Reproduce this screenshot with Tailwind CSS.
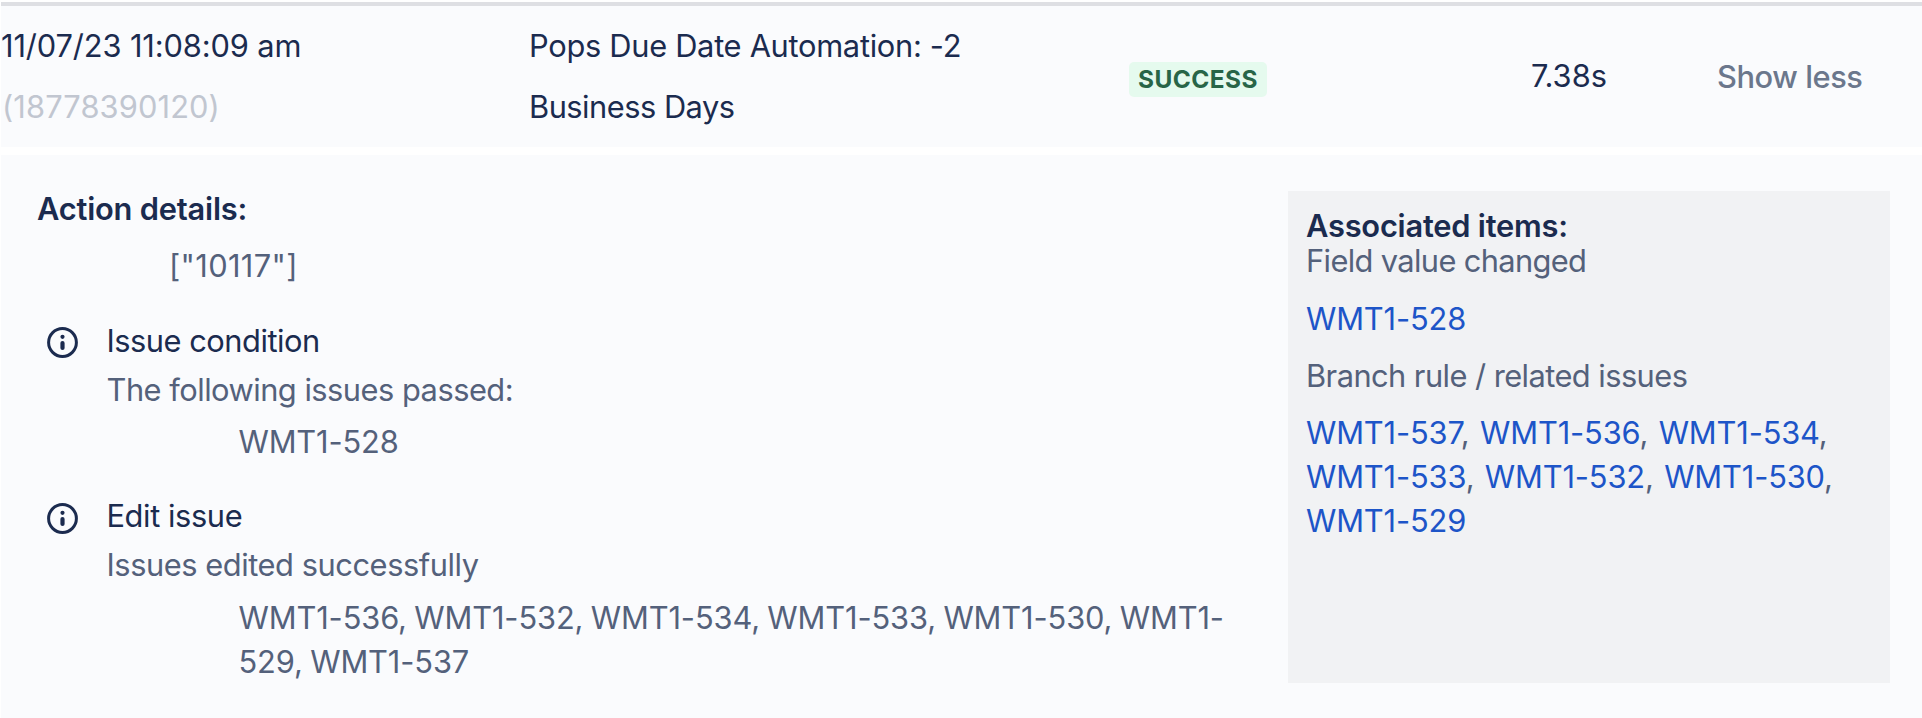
<!DOCTYPE html>
<html lang="en">
<head>
    <meta charset="UTF-8">
    <meta name="viewport" content="width=device-width, initial-scale=1.0">
    <title>Audit log</title>
    <script src="https://cdn.jsdelivr.net/npm/@tailwindcss/browser@4"></script>
    <style>
        body {
            font-family: 'Inter', sans-serif;
        }
    </style>
</head>
<body class="bg-white text-[30.8px] leading-[44px] font-[430] text-[#1b2b4f] w-[1922px] h-[718px] overflow-hidden pl-px pt-0.5 flex flex-col">

<!-- Log entry -->
<div class="flex items-center h-[145px] shrink-0 border-t-4 border-[#dedfe3] bg-[#fafbfd] leading-[61px]">
    <div class="w-[528px] shrink-0 pb-0.5">
        <div class="tracking-[-0.12px]">11/07/23 11:08:09 am</div>
        <div class="tracking-[0.12px] pl-px text-[#c1c6d0]">(18778390120)</div>
    </div>
    <div class="w-[600px] shrink-0 pb-0.5">
        <div class="tracking-[-0.29px]">Pops Due Date Automation: -2</div>
        <div class="tracking-[-0.5px]">Business Days</div>
    </div>
    <div class="w-[402px] shrink-0 flex pt-1.5">
        <span class="bg-[#e5faee] text-[#286547] font-bold text-[24.4px] tracking-[0.45px] leading-[34px] h-[35px] rounded-[5px] px-[9px]">SUCCESS</span>
    </div>
    <div class="w-[186px] shrink-0 pb-0.5">7.38s</div>
    <button class="font-medium tracking-[-0.42px]">
        <span class="text-[#6b778c]">Show less</span>
    </button>
</div>

<!-- Expanded details -->
<div class="mt-2 flex h-[563px] shrink-0 bg-[#fafbfd] pl-9 pr-8 pt-8 pb-[35px]">
    <div class="w-[1215px] shrink-0 mr-9">
        <h2 class="font-semibold tracking-[-0.2px]">Action details:</h2>
        <p class="mt-[13px] pl-[132px] tracking-[0.35px] text-[#54617b]">["10117"]</p>

        <div class="mt-[31px] flex">
            <svg class="w-[31px] h-[31px] mt-2 ml-2.5 mr-[28.5px] shrink-0" viewBox="0 0 31 31" fill="none">
                <circle cx="15.5" cy="15.5" r="13.9" stroke="#1b2b4f" stroke-width="3"/>
                <circle cx="15.5" cy="9.8" r="2.1" fill="#1b2b4f"/>
                <rect x="13.4" y="14" width="4.2" height="9" rx="2.1" fill="#1b2b4f"/>
            </svg>
            <div>
                <h3 class="tracking-[-0.48px]">Issue condition</h3>
                <p class="mt-[5px] tracking-[-0.5px] text-[#54617b]">The following issues passed:</p>
                <p class="mt-2 pl-[132px] tracking-[-0.15px] text-[#54617b]">WMT1-528</p>
            </div>
        </div>

        <div class="mt-[30px] flex">
            <svg class="w-[31px] h-[31px] mt-[9px] ml-2.5 mr-[28.5px] shrink-0" viewBox="0 0 31 31" fill="none">
                <circle cx="15.5" cy="15.5" r="13.9" stroke="#1b2b4f" stroke-width="3"/>
                <circle cx="15.5" cy="9.8" r="2.1" fill="#1b2b4f"/>
                <rect x="13.4" y="14" width="4.2" height="9" rx="2.1" fill="#1b2b4f"/>
            </svg>
            <div>
                <h3 class="tracking-[-0.4px]">Edit issue</h3>
                <p class="mt-[5px] tracking-[-0.44px] text-[#54617b]">Issues edited successfully</p>
                <p class="mt-[9px] pl-[132px] tracking-[-0.12px] [word-spacing:-1.1px] text-[#54617b] whitespace-nowrap">WMT1-536, WMT1-532, WMT1-534, WMT1-533, WMT1-530, WMT1-<br>529, WMT1-537</p>
            </div>
        </div>
    </div>

    <aside class="grow mt-1 h-[492px] px-[18px] pt-[17px] bg-[#f1f2f4] text-[#54617b]">
        <h2 class="font-semibold leading-[35px] tracking-[-0.22px] text-[#1b2b4f]">Associated items:</h2>
        <p class="leading-[35px] tracking-[-0.63px]">Field value changed</p>
        <p class="mt-[19px] tracking-[-0.15px] text-[#1d55c8]">WMT1-528</p>
        <p class="mt-[13px] tracking-[-0.55px]">Branch rule / related issues</p>
        <div class="mt-[13px] flex flex-wrap gap-x-[10.5px] tracking-[-0.15px]">
            <span><a class="text-[#1d55c8]">WMT1-537</a>,</span>
            <span><a class="text-[#1d55c8]">WMT1-536</a>,</span>
            <span><a class="text-[#1d55c8]">WMT1-534</a>,</span>
            <span><a class="text-[#1d55c8]">WMT1-533</a>,</span>
            <span><a class="text-[#1d55c8]">WMT1-532</a>,</span>
            <span><a class="text-[#1d55c8]">WMT1-530</a>,</span>
            <span><a class="text-[#1d55c8]">WMT1-529</a></span>
        </div>
    </aside>
</div>
</body>
</html>
